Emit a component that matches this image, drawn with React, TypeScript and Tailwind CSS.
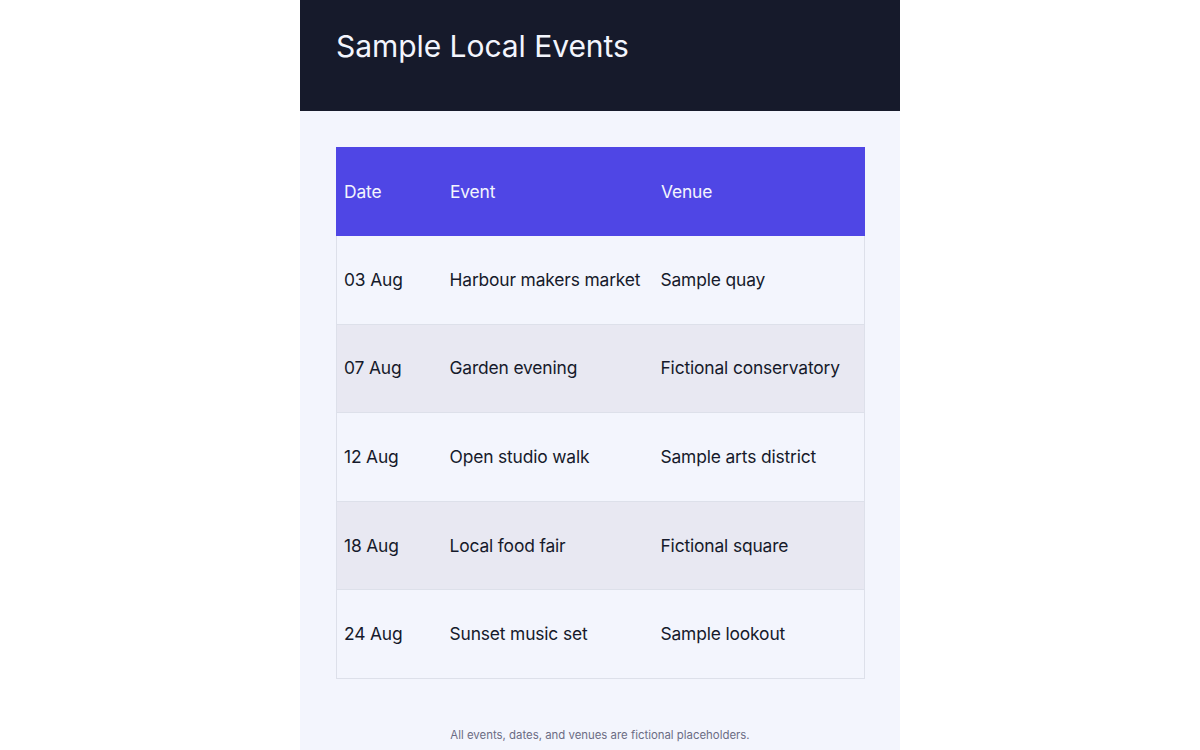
import React from "react";

const rows = [
  ["03 Aug", "Harbour makers market", "Sample quay"],
  ["07 Aug", "Garden evening", "Fictional conservatory"],
  ["12 Aug", "Open studio walk", "Sample arts district"],
  ["18 Aug", "Local food fair", "Fictional square"],
  ["24 Aug", "Sunset music set", "Sample lookout"],
];

export default function App() {
  return (
    <div className="min-h-screen bg-white" style={{ fontFamily: "Inter, 'Liberation Sans', sans-serif" }}>
      <div className="mx-auto w-[600px] bg-[#f3f5fd] min-h-[750px]">
        <header className="bg-[#161a2b] h-[111px] px-[36px] pt-[26px]">
          <h1 className="text-[30px] leading-[40px] text-[#f3f5fd] font-normal tracking-[-0.05px]">Sample Local Events</h1>
        </header>
        <main className="px-[36px] pt-[36px]">
          <table className="w-[528px] border-collapse table-fixed text-[17.4px] leading-[24px] tracking-[-0.15px]">
            <colgroup>
              <col className="w-[106px]" />
              <col className="w-[211px]" />
              <col className="w-[211px]" />
            </colgroup>
            <thead>
              <tr className="bg-[#4f46e5] text-[#f3f5fd] h-[88px]">
                <th className="text-left font-normal px-[7px] border border-[#4f46e5]">Date</th>
                <th className="text-left font-normal px-[7px] border border-[#4f46e5]">Event</th>
                <th className="text-left font-normal px-[7px] border border-[#4f46e5]">Venue</th>
              </tr>
            </thead>
            <tbody>
              {rows.map((r, i) => (
                <tr key={i} className={`h-[88.6px] text-[#161a2b] ${i % 2 === 1 ? "bg-[#e8e8f2]" : "bg-[#f3f5fd]"}`}>
                  {r.map((c, j) => (
                    <td key={j} className={`px-[7px] border-y border-[#dde0ea] whitespace-nowrap ${j === 0 ? "border-l" : ""} ${j === 2 ? "border-r" : ""}`}>
                      {c}
                    </td>
                  ))}
                </tr>
              ))}
            </tbody>
          </table>
          <p className="text-center text-[11.4px] leading-[16px] text-[#6b6c84] mt-[48px]">
            All events, dates, and venues are fictional placeholders.
          </p>
        </main>
      </div>
    </div>
  );
}
